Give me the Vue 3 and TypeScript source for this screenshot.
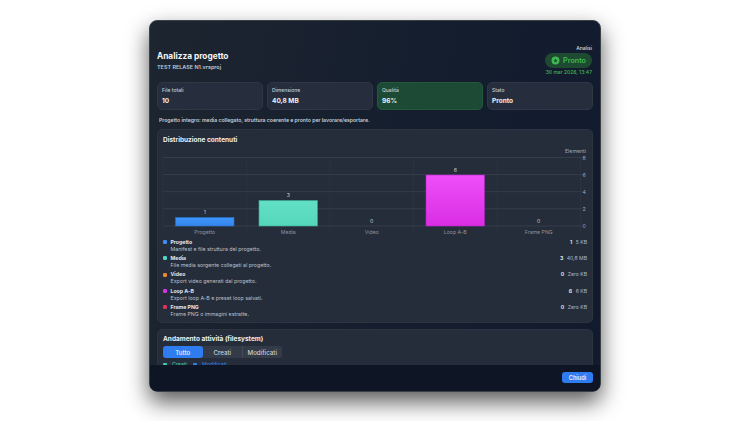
<script setup lang="ts">
const stats = [
  { label: 'File totali', value: '10', good: false },
  { label: 'Dimensione', value: '40,8 MB', good: false },
  { label: 'Qualità', value: '96%', good: true },
  { label: 'Stato', value: 'Pronto', good: false },
]
const legend = [
  { name: 'Progetto', desc: 'Manifest e file struttura del progetto.', count: 1, size: '5 KB', color: '#3b8ff5' },
  { name: 'Media', desc: 'File media sorgente collegati al progetto.', count: 3, size: '40,8 MB', color: '#4fd8bd' },
  { name: 'Video', desc: 'Export video generati dal progetto.', count: 0, size: 'Zero KB', color: '#e68a2e' },
  { name: 'Loop A-B', desc: 'Export loop A-B e preset loop salvati.', count: 6, size: '6 KB', color: '#d633e6' },
  { name: 'Frame PNG', desc: 'Frame PNG o immagini estratte.', count: 0, size: 'Zero KB', color: '#e0335c' },
]
const plotX = 5
const colW = 83.5
const bars = [
  { name: 'Progetto', v: 1, top: '#3d95fb', bottom: '#3686ec', edge: '#2a6fc4' },
  { name: 'Media', v: 3, top: '#62e0c6', bottom: '#55d6bb', edge: '#3aa893' },
  { name: 'Video', v: 0, top: '', bottom: '', edge: '' },
  { name: 'Loop A-B', v: 6, top: '#ee4ff8', bottom: '#d92de4', edge: '#b524c2' },
  { name: 'Frame PNG', v: 0, top: '', bottom: '', edge: '' },
]
const gridY = [28.5, 45.6, 62.7, 79.8, 97]
const ticks = [8, 6, 4, 2, 0]
const unit = 8.5
const cols = [0, 1, 2, 3, 4, 5]
</script>

<template>
  <div class="page">
    <div class="modal">
      <div class="scroll">
        <header class="head">
          <div class="titles">
            <h1>Analizza progetto</h1>
            <p>TEST RELASE N1.vrsproj</p>
          </div>
          <div class="status">
            <span class="kicker">Analisi</span>
            <span class="pill">
              <svg viewBox="0 0 10 10" width="9" height="9">
                <circle cx="5" cy="5" r="4.4" fill="#3fb950" />
                <path d="M5 2.6l.75 1.6 1.7.2-1.25 1.2.33 1.7L5 6.45 3.47 7.3l.33-1.7L2.55 4.4l1.7-.2z" fill="#1b5e33" />
              </svg>
              Pronto
            </span>
            <span class="when">30 mar 2026, 13:47</span>
          </div>
        </header>

        <section class="stats">
          <div v-for="s in stats" :key="s.label" class="stat" :class="{ good: s.good }">
            <span class="stat-label">{{ s.label }}</span>
            <strong>{{ s.value }}</strong>
          </div>
        </section>

        <p class="note">Progetto integro: media collegato, struttura coerente e pronto per lavorare/esportare.</p>

        <section class="panel dist">
          <h2>Distribuzione contenuti</h2>
          <svg class="chart" viewBox="0 0 430 110" width="430" height="110">
            <defs>
              <linearGradient v-for="(b, i) in bars" :id="'g' + i" :key="b.name" x1="0" y1="0" x2="0" y2="1">
                <stop offset="0" :stop-color="b.top" />
                <stop offset="1" :stop-color="b.bottom" />
              </linearGradient>
            </defs>
            <text x="428" y="23.8" text-anchor="end" class="axis-title">Elementi</text>
            <line v-for="y in gridY" :key="y" :x1="plotX" :x2="plotX + colW * 5 + 2" :y1="y" :y2="y" class="grid" />
            <line v-for="c in cols" :key="c" :x1="plotX + colW * c" :x2="plotX + colW * c" y1="28.5" y2="103" class="vgrid" />
            <text v-for="(t, i) in ticks" :key="t" x="424.5" :y="gridY[i] + 2" class="tick">{{ t }}</text>
            <g v-for="(b, i) in bars" :key="b.name">
              <rect
                v-if="b.v > 0"
                :x="plotX + colW * i + 12.5"
                :y="97 - b.v * unit"
                width="58.5"
                :height="b.v * unit"
                :fill="'url(#g' + i + ')'"
                :stroke="b.edge"
                stroke-width="0.6"
              />
              <text :x="plotX + colW * i + colW / 2" :y="97 - b.v * unit - 3.5" text-anchor="middle" class="val">{{ b.v }}</text>
              <text :x="plotX + colW * i + colW / 2" y="105" text-anchor="middle" class="cat">{{ b.name }}</text>
            </g>
          </svg>
          <ul class="legend">
            <li v-for="l in legend" :key="l.name">
              <i :style="{ background: l.color }"></i>
              <div class="l-text">
                <b>{{ l.name }}</b>
                <span>{{ l.desc }}</span>
              </div>
              <b class="l-count">{{ l.count }}</b>
              <span class="l-size">{{ l.size }}</span>
            </li>
          </ul>
        </section>

        <section class="panel activity">
          <h2>Andamento attività (filesystem)</h2>
          <div class="segs">
            <button class="seg on">Tutto</button>
            <button class="seg">Creati</button>
            <button class="seg">Modificati</button>
          </div>
          <div class="keys">
            <span class="key teal"><i></i>Creati</span>
            <span class="key blue"><i></i>Modificati</span>
          </div>
        </section>
      </div>
      <footer class="foot">
        <button class="close">Chiudi</button>
      </footer>
    </div>
  </div>
</template>

<style>
html, body { margin: 0; background: #fff; }
</style>

<style scoped>
.page {
  width: 750px;
  height: 421px;
  box-sizing: border-box;
  padding: 20px 149px 29px;
  overflow: hidden;
  font-family: Inter, "Liberation Sans", sans-serif;
  color: #e9edf3;
}
.modal {
  height: 372px;
  box-sizing: border-box;
  display: flex;
  flex-direction: column;
  border-radius: 8px;
  border: 1px solid #3c4147;
  background: linear-gradient(100deg, #1d2530 0%, #151e2e 55%, #121b2e 100%);
  box-shadow: 0 10px 22px rgba(0, 0, 0, 0.65);
  overflow: hidden;
}
.scroll { flex: 1; min-height: 0; overflow: hidden; padding: 0 7px; }
.head { display: flex; justify-content: space-between; align-items: flex-start; padding: 24px 1px 0 0; height: 61px; box-sizing: border-box; }
.titles { padding-top: 6px; }
h1 { margin: 0; font-size: 8.3px; line-height: 11px; font-weight: 700; color: #f3f5f8; }
.titles p { margin: 2px 0 0; font-size: 5.45px; line-height: 7px; font-weight: 600; color: #c5cad2; }
.status { display: flex; flex-direction: column; align-items: flex-end; gap: 1.5px; }
.kicker { font-size: 5px; line-height: 6px; font-weight: 500; color: #d5d9df; }
.pill {
  display: flex; align-items: center; gap: 3px;
  height: 15px; padding: 0 6px;
  border-radius: 8px;
  background: #1d4a30;
  color: #3fb950;
  font-size: 7.2px; font-weight: 600;
}
.when { font-size: 5px; line-height: 7px; font-weight: 500; color: #3fb950; }
.stats { display: grid; grid-template-columns: repeat(4, 1fr); gap: 4px; }
.stat {
  height: 28px; box-sizing: border-box;
  padding: 4px 4px 0;
  border-radius: 5px;
  background: #262d3c;
  border: 1px solid #2f3644;
  display: flex; flex-direction: column; gap: 3.5px;
}
.stat.good { background: #1c4a34; border-color: #25593e; }
.stat-label { font-size: 5px; line-height: 6px; color: #c8ccd3; font-weight: 500; }
.stat strong { font-size: 6.5px; line-height: 8px; font-weight: 700; color: #f0f2f5; }
.note { margin: 6px 0 0 2px; height: 8px; font-size: 5.15px; line-height: 8px; font-weight: 600; color: #c9cdd4; }
.panel {
  border-radius: 5px;
  background: #252c3a;
  border: 1px solid #2c3341;
  box-sizing: border-box;
}
.dist { margin-top: 5px; height: 194px; padding: 6px 5px 0; }
h2 { margin: 0; font-size: 6.5px; line-height: 8px; font-weight: 700; color: #eef0f4; }
.chart { display: block; margin-top: -15px; margin-left: -5px; width: 430px; height: 110px; }
.axis-title, .tick, .val, .cat { font-family: Inter, "Liberation Sans", sans-serif; font-size: 5.2px; }
.axis-title, .tick { fill: #a3a8b1; }
.val { fill: #c8ccd2; }
.cat { fill: #8f959f; }
.grid { stroke: #3a414e; stroke-width: 0.8; }
.vgrid { stroke: #3a414e; stroke-width: 0.6; stroke-dasharray: 1.2 1.2; }
.legend { list-style: none; margin: 0; padding: 0; }
.legend li { display: flex; align-items: flex-start; gap: 3.5px; height: 16.2px; }
.legend i { width: 4px; height: 4px; border-radius: 1.2px; margin: 1.2px 0 0; flex: none; }
.l-text { flex: 1; display: flex; flex-direction: column; gap: 0.6px; }
.l-text b { font-size: 5.2px; line-height: 6.5px; font-weight: 700; color: #e4e7ec; }
.l-text span { font-size: 5.25px; line-height: 6.5px; color: #bcc1c9; }
.l-count { font-size: 5.2px; line-height: 6.5px; font-weight: 700; color: #dfe2e7; }
.l-size { font-size: 5.1px; line-height: 6.5px; color: #b6bbc3; }
.activity { margin-top: 6px; height: 60px; padding: 5px 5px 0; }
.segs { display: flex; width: fit-content; margin-top: 3px; height: 12px; border-radius: 3px; background: #333a48; }
.seg {
  border: 0; padding: 0; margin: 0;
  height: 12px; width: 39.5px;
  border-radius: 3px;
  background: transparent;
  color: #c9cdd4;
  font: 500 6.2px Inter, "Liberation Sans", sans-serif;
}
.seg + .seg + .seg { border-left: 0.5px solid #434a58; border-radius: 0 3px 3px 0; }
.seg.on { background: #2f7bf0; color: #f3f6fb; }
.keys { display: flex; gap: 6px; margin-top: 3px; font-size: 5.3px; line-height: 7px; }
.key { display: flex; align-items: center; gap: 5px; }
.key i { width: 4px; height: 4px; border-radius: 1px; background: currentColor; }
.teal { color: #46c9ae; }
.blue { color: #2f80f0; }
.foot {
  flex: none; height: 26px; box-sizing: border-box;
  display: flex; justify-content: flex-end; align-items: center;
  padding: 0 7px 1px;
  background: #0e1626;
}
.close {
  border: 0; height: 11.5px; width: 31px; padding: 0;
  border-radius: 3px;
  background: #2f7bf0;
  color: #eaf1fb;
  font: 600 5.6px Inter, "Liberation Sans", sans-serif;
}
</style>
